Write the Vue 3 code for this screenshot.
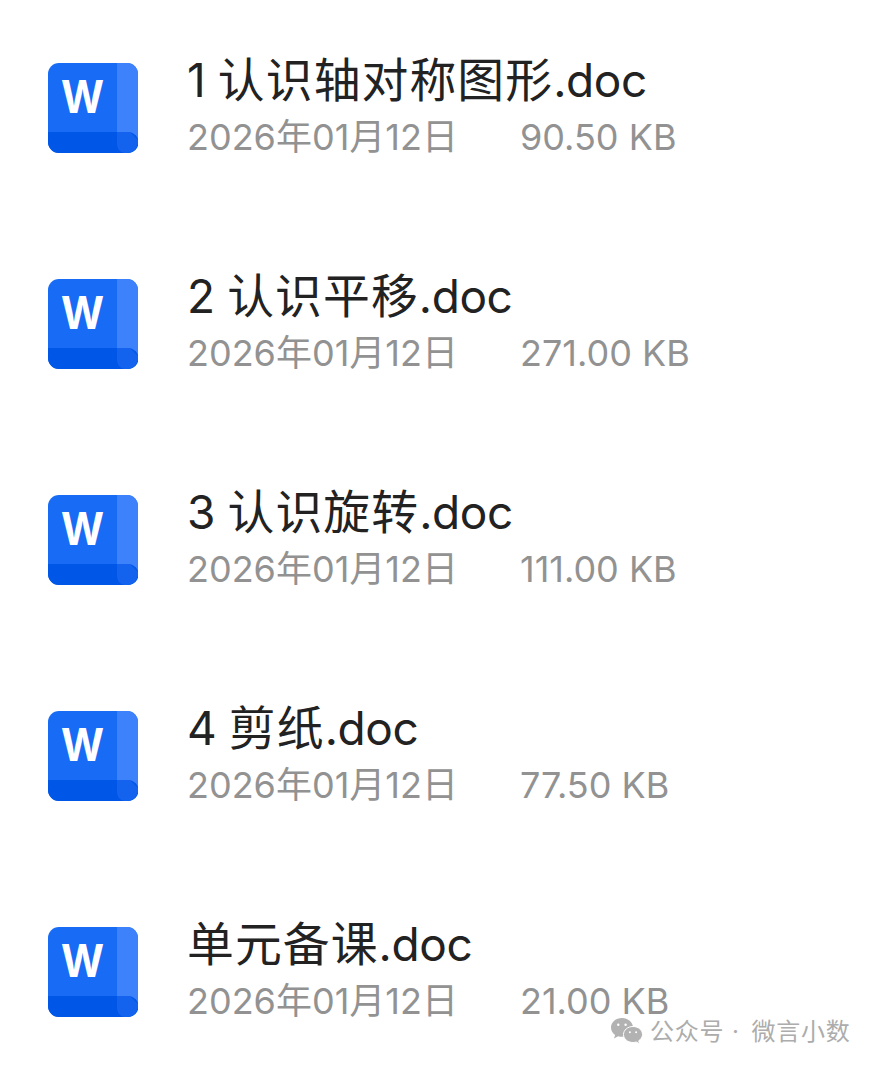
<script setup>
const files = [
    { name: '1 认识轴对称图形.doc', date: '2026年01月12日', size: '90.50 KB' },
    { name: '2 认识平移.doc', date: '2026年01月12日', size: '271.00 KB' },
    { name: '3 认识旋转.doc', date: '2026年01月12日', size: '111.00 KB' },
    { name: '4 剪纸.doc', date: '2026年01月12日', size: '77.50 KB' },
    { name: '单元备课.doc', date: '2026年01月12日', size: '21.00 KB' },
];

// 中文和西文的字距不同，拆成片段分别渲染
const splitName = (name) => name.match(/[\u4e00-\u9fff]+|[^\u4e00-\u9fff]+/g)
    .map((text) => ({ text, han: /[\u4e00-\u9fff]/.test(text) }));
</script>

<template>
    <div class="page">
        <div v-for="file in files" :key="file.name" class="file-row">
            <svg class="file-icon" viewBox="0 0 90 90">
                <rect width="90" height="90" rx="11" fill="#176bf5" />
                <path d="M69 0H79A11 11 0 0 1 90 11V80H69Z" fill="#3d82fb" />
                <path d="M0 69H80A10.500 10.500 0 0 1 80 90H11A11 11 0 0 1 0 79Z" fill="#0056e6" />
                <path d="M69 69H82L90 77V79A11 11 0 0 1 79 90H76Q69 88 69 81Z" fill="#1463ee" />
                <text x="13" y="50" textLength="43" lengthAdjust="spacingAndGlyphs">W</text>
            </svg>
            <div class="file-info">
                <div class="file-name"><span v-for="(part, i) in splitName(file.name)" :key="i" :class="{ han: part.han }">{{ part.text }}</span></div>
                <div class="file-meta">
                    <span class="file-date">{{ file.date }}</span>
                    <span>{{ file.size }}</span>
                </div>
            </div>
        </div>

        <!-- 公众号水印 -->
        <div class="watermark">
            <svg class="wechat" viewBox="0 0 32 26">
                <path d="M11 0C4.900 0 0 4.200 0 9.500c0 3 1.600 5.600 4.100 7.400L3 20.400l4.100-2.200c1.200.4 2.500.6 3.900.6C17 18.800 22 14.700 22 9.500S17 0 11 0Z" />
                <path class="front" d="M22 8.500c-5.300 0-9.500 3.600-9.500 8s4.200 8 9.500 8c1.100 0 2.200-.2 3.200-.5l3.400 1.900-.9-3.100c2.300-1.500 3.800-3.700 3.800-6.300 0-4.400-4.200-8-9.500-8Z" />
                <circle cx="7.300" cy="6.700" r="1.200" fill="#fff" />
                <circle cx="14.600" cy="6.700" r="1.200" fill="#fff" />
                <circle cx="18.900" cy="14.200" r="1" fill="#fff" />
                <circle cx="25.100" cy="14.200" r="1" fill="#fff" />
            </svg>
            <div class="watermark-text">
                <span>公众号</span>
                <span class="dot">·</span>
                <span>微言小数</span>
            </div>
        </div>
    </div>
</template>

<style>
body {
    background: #fff;
}
</style>

<style scoped>
.page {
    position: relative;
    height: 1065px;
    padding-top: 55px;
    box-sizing: border-box;
    overflow: hidden;
    font-family: Inter, "Noto Sans CJK SC", sans-serif;
}

.file-row {
    display: flex;
    height: 216px;
    padding-left: 48px;
}

.file-icon {
    width: 90px;
    height: 90px;
    margin: 8px 48px 0 0;
}

.file-icon text {
    font-size: 45px;
    font-weight: 700;
    fill: #fff;
}

.file-name {
    height: 52px;
    padding-left: 1px;
    font-size: 46px;
    line-height: 50px;
    letter-spacing: -0.4px;
    color: #222;
    white-space: pre;
}

.han {
    font-size: 46.800px;
    letter-spacing: 1.100px;
}

.file-meta {
    display: flex;
    padding-left: 1px;
    font-size: 36px;
    line-height: 61px;
    color: #929292;
}

.file-date {
    width: 333px;
}

.watermark {
    position: absolute;
    left: 611px;
    top: 1013px;
    display: flex;
    align-items: center;
    height: 36px;
    font-family: "Noto Sans CJK SC", sans-serif;
    font-size: 24px;
    letter-spacing: 0.800px;
    color: #acacac;
    white-space: nowrap;
}

.wechat {
    width: 32px;
    height: 26px;
    margin-right: 7px;
    fill: #b2b2b2;
}

.wechat .front {
    stroke: #fff;
    stroke-width: 1;
}

.watermark-text {
    display: flex;
    align-items: baseline;
    padding-bottom: 4px;
}

.dot {
    width: 27px;
    padding-right: 4px;
    box-sizing: border-box;
    font-family: Inter, sans-serif;
    text-align: center;
}
</style>
